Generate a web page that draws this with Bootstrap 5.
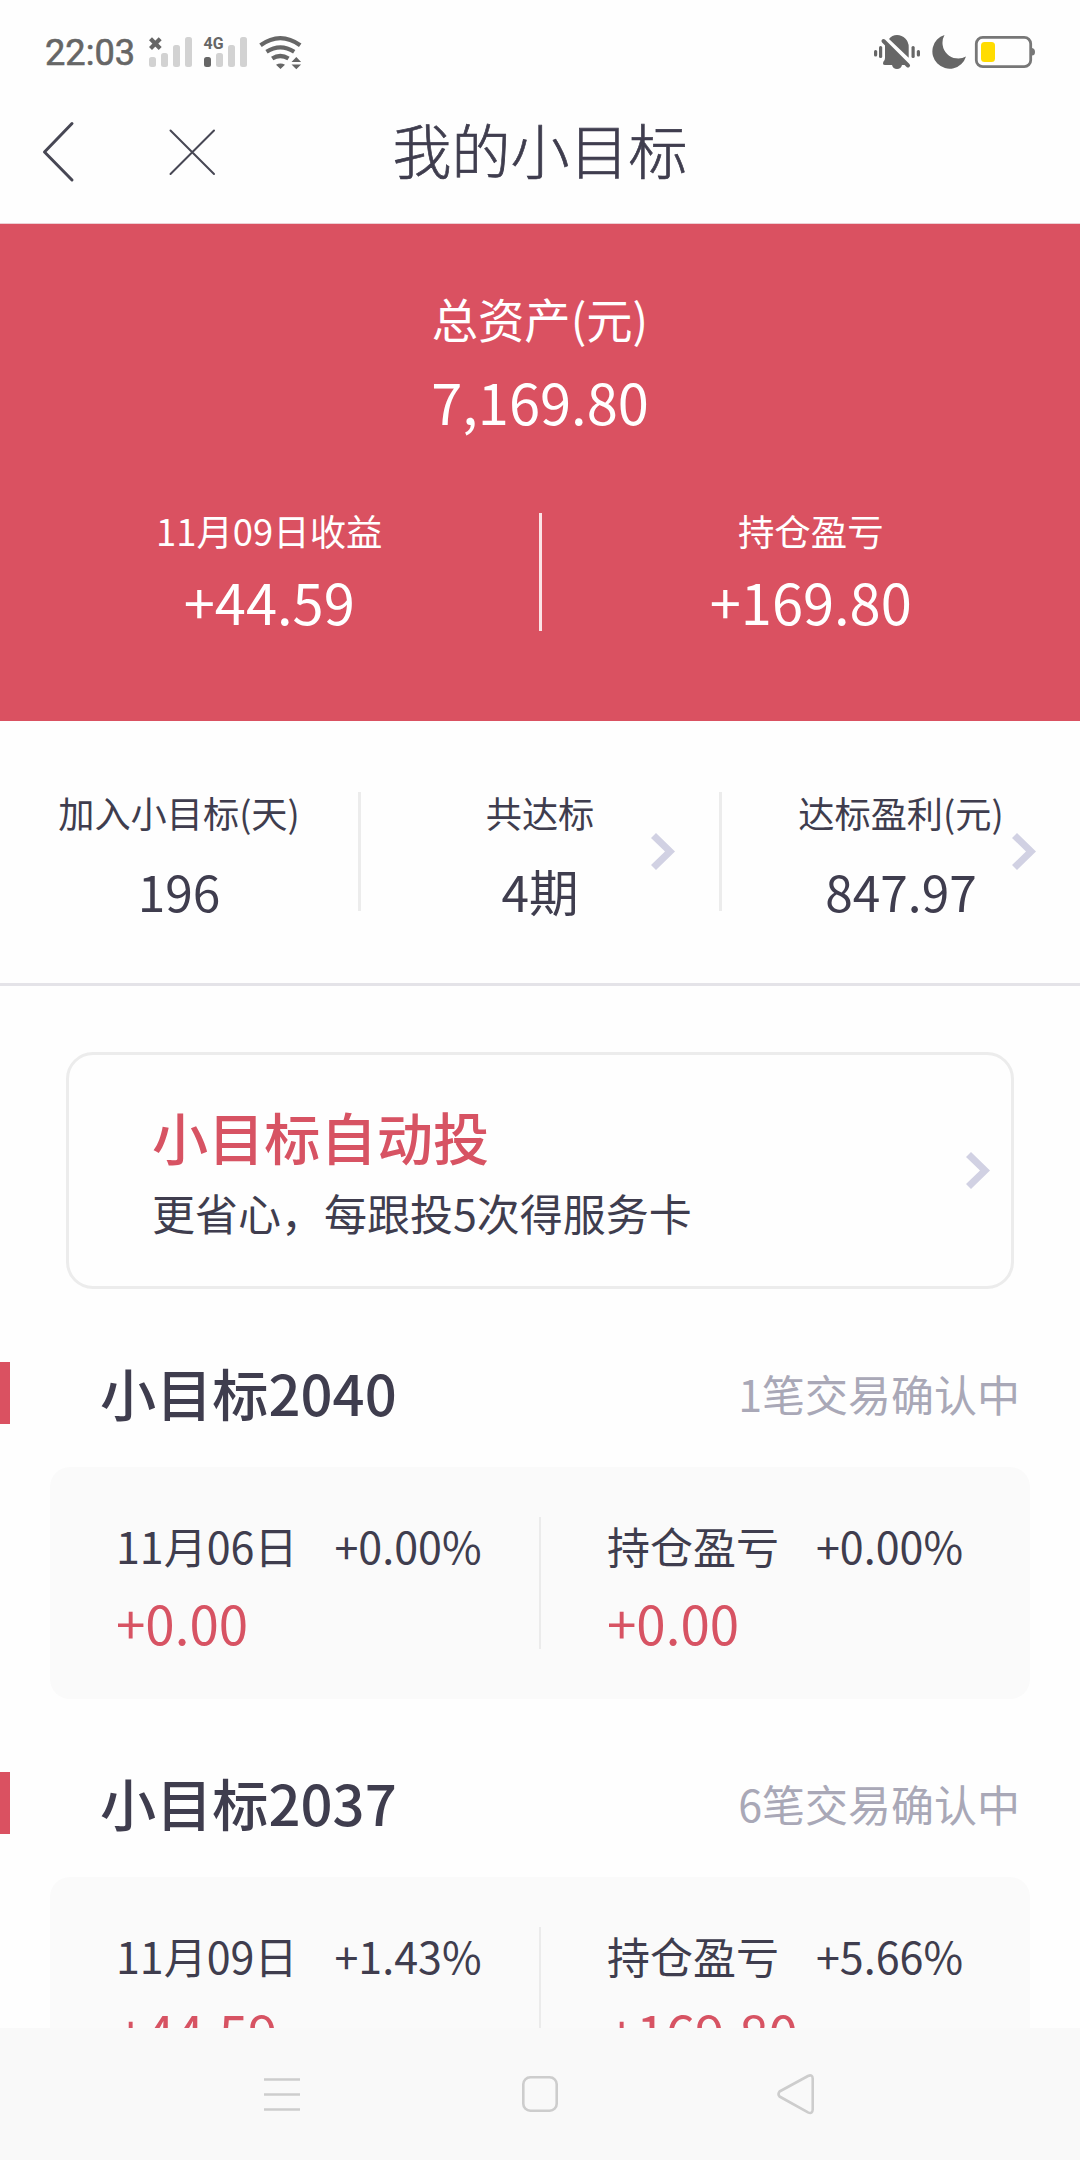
<!DOCTYPE html>
<html lang="zh-CN">
<head>
<meta charset="utf-8">
<meta name="viewport" content="width=device-width, initial-scale=1">
<title>我的小目标</title>
<link href="https://cdn.jsdelivr.net/npm/bootstrap@5.3.0/dist/css/bootstrap.min.css" rel="stylesheet">
<style>
  body { font-family: "Noto Sans CJK SC", sans-serif; color: #3f3d4e; background: #fefefe; line-height: 1; }
  svg { display: block; flex: none; }
  .screen { width: 1080px; height: 2160px; }
  .status { height: 100px; padding: 30px 40px 0 45px; }
  .clock { font: 400 36.2px/46px Roboto, sans-serif; color: #666; -webkit-text-stroke: .6px #666; width: 98px; }
  .titlebar { height: 124px; border-bottom: 1px solid #eccfd4; }
  .titlebar-side { width: 380px; padding: 21px 0 0 41px; }
  .titlebar h1 { font-size: 59px; font-weight: 300; line-height: 98px; -webkit-text-stroke: .7px #3f3d4e; }
  .close-icon { margin-left: 90px; }
  .hero { height: 497px; background: #da5161; padding-top: 64px; }
  .hero-label { font-size: 46.3px; line-height: 60px; }
  .hero-sum { font-size: 56px; line-height: 80px; margin-top: 13px; }
  .hero-cols { margin-top: 72px; height: 118px; }
  .hero-name { font-size: 36.4px; line-height: 34px; }
  .hero-num { font-size: 56px; line-height: 60px; margin-top: 24px; }
  .hero-rule { width: 3px; background: #fbe3e6; }
  .stats { height: 265px; padding-top: 71px; border-bottom: 3px solid #e4e3e8; }
  .stat { height: 119px; }
  .stat + .stat { border-left: 3px solid #ececec; }
  .stat-name { font-size: 36.2px; line-height: 41px; }
  .stat-num { font-size: 49.6px; line-height: 60px; margin-top: 27px; }
  .stat-arrow { right: 44px; top: 41px; }
  .auto { margin: 66px 66px 0; height: 237px; border: 3px solid #ececec; border-radius: 27px; padding: 0 21px 0 83px; background: #fefefe; }
  .auto h2 { font-size: 56.2px; font-weight: 500; line-height: 70px; color: #d75363; margin: 0; }
  .auto p { font-size: 43px; line-height: 60px; margin: 11px 0 0; }
  .auto-text { height: 190px; padding-top: 25px; }
  .goal { height: 410px; padding-top: 73px; }
  .goal-head { height: 62px; border-left: 10px solid #da5161; padding: 0 60px 0 90px; }
  .goal-head h3 { font-size: 56.2px; font-weight: 500; line-height: 60px; margin: 0; }
  .goal-state { font-size: 43px; line-height: 63px; color: #a9a8b7; }
  .panel { margin: 43px 50px 0; height: 232px; border-radius: 20px; background: #fafafa; padding-top: 50px; }
  .panel-col { height: 132px; padding-left: 66px; }
  .panel-col + .panel-col { border-left: 2px solid #ebebeb; }
  .panel-line { font-size: 43px; line-height: 57px; }
  .panel-line .pct { margin-left: 37px; }
  .panel-amt { font-size: 52.9px; line-height: 60px; margin-top: 18px; color: #d75363; }
  .sysnav { height: 132px; background: #f9f9f9; z-index: 2; }
</style>
</head>
<body>
<div class="screen d-flex flex-column overflow-hidden position-relative">
  <div class="status d-flex flex-shrink-0 align-items-start">
    <div class="clock">22:03</div>
    <svg width="170" height="45" viewBox="143 30 170 45" fill="#d2d2d2">
      <path d="M150.500 38.700l9.700 9.700M160.200 38.700l-9.700 9.700" stroke="#666" stroke-width="4.200" fill="none"/>
      <rect x="149" y="57" width="7" height="10" rx="2.5"/><rect x="161" y="53" width="7" height="14" rx="2.5"/><rect x="173" y="45" width="7" height="22" rx="2.5"/><rect x="185" y="37" width="7" height="30" rx="2.5"/>
      <rect x="204" y="57" width="7" height="10" rx="2.5" fill="#666"/><rect x="216" y="53" width="7" height="14" rx="2.5"/><rect x="228" y="45" width="7" height="22" rx="2.5"/><rect x="240" y="37" width="7" height="30" rx="2.5"/>
      <text x="203.5" y="49" font-family="Roboto, sans-serif" font-weight="700" font-size="17" textLength="20" lengthAdjust="spacingAndGlyphs" fill="#666">4G</text>
      <g fill="none" stroke="#666" stroke-width="4.2"><path d="M260.5 45.3Q280.3 31 300.2 45.3"/><path d="M266.5 51.8Q280.3 43 294.2 51.8"/><path d="M272.2 58.6Q280.3 53.4 288.5 58.6"/></g>
      <path d="M276 64.8Q280.5 62 285 64.8L280.5 69zM291.5 62L296.3 57 301.1 62zM291.5 64.4L296.3 69.2 301.1 64.4z" fill="#666"/>
    </svg>
    <svg class="ms-auto" width="170" height="45" viewBox="870 30 170 45" fill="#666">
      <path d="M889 39Q892 35 897 35A12 12 0 0 1 908.7 47V57.8Z"/>
      <path d="M885 42V58Q885 60 883.5 61.5Q882 65 885 65H892Q893 69 897 69Q901 69 902 65H906Z"/>
      <path d="M883.5 41L908 65.5" stroke="#666" stroke-width="4" stroke-linecap="round"/>
      <rect x="874" y="50" width="3.2" height="6.4" rx="1.5"/><rect x="879" y="46" width="3.2" height="12" rx="1.5"/><rect x="911.5" y="46" width="3.2" height="12" rx="1.5"/><rect x="916.8" y="50" width="3.2" height="6.4" rx="1.5"/>
      <path d="M944.5 35A17.2 17.2 0 1 0 966 56.5A15.8 15.8 0 0 1 944.5 35Z"/>
      <rect x="976.3" y="37.3" width="54.4" height="29.4" rx="6.5" fill="none" stroke="#777" stroke-width="2.8"/>
      <path d="M1032 48Q1035 48.500 1035 52T1032 55.500Z" fill="#777"/>
      <rect x="981" y="42" width="14" height="20" rx="3.5" fill="#ffdc00"/>
    </svg>
  </div>

  <header class="titlebar d-flex flex-shrink-0">
    <div class="titlebar-side d-flex align-items-start">
      <svg width="36" height="62" viewBox="41 121 36 62" fill="none" stroke="#474754" stroke-width="3" stroke-linecap="round" stroke-linejoin="round"><path d="M72 123.500L44.500 152L72 180"/></svg>
      <svg class="close-icon" width="50" height="62" viewBox="167 121 50 62" fill="none" stroke="#474754" stroke-width="2" stroke-linecap="round"><path d="M170.500 130.500L214 174M214 130.500L170.500 174"/></svg>
    </div>
    <h1 class="flex-fill text-center m-0">我的小目标</h1>
    <div class="titlebar-side"></div>
  </header>

  <section class="hero flex-shrink-0 text-white text-center">
    <div class="hero-label">总资产(元)</div>
    <div class="hero-sum">7,169.80</div>
    <div class="hero-cols d-flex">
      <div class="col"><div class="hero-name">11月09日收益</div><div class="hero-num">+44.59</div></div>
      <div class="hero-rule"></div>
      <div class="col"><div class="hero-name">持仓盈亏</div><div class="hero-num">+169.80</div></div>
    </div>
  </section>

  <section class="stats d-flex flex-shrink-0 text-center">
    <div class="stat col"><div class="stat-name">加入小目标(天)</div><div class="stat-num">196</div></div>
    <div class="stat col position-relative"><div class="stat-name">共达标</div><div class="stat-num">4期</div>
      <svg class="stat-arrow position-absolute" width="24" height="37" fill="#d1d1e3"><path d="M0 5L5 0L24 18.500L5 37L0 32L14 18.500Z"/></svg></div>
    <div class="stat col position-relative"><div class="stat-name">达标盈利(元)</div><div class="stat-num">847.97</div>
      <svg class="stat-arrow position-absolute" width="24" height="37" fill="#d1d1e3"><path d="M0 5L5 0L24 18.500L5 37L0 32L14 18.500Z"/></svg></div>
  </section>

  <section class="auto d-flex flex-shrink-0 align-items-center justify-content-between">
    <div class="auto-text"><h2>小目标自动投</h2><p>更省心，每跟投5次得服务卡</p></div>
    <svg width="24" height="37" fill="#d1d1e3"><path d="M0 5L5 0L24 18.500L5 37L0 32L14 18.500Z"/></svg>
  </section>

  <section class="goal flex-shrink-0">
    <div class="goal-head d-flex justify-content-between"><h3>小目标2040</h3><div class="goal-state">1笔交易确认中</div></div>
    <div class="panel d-flex">
      <div class="panel-col col"><div class="panel-line d-flex"><span>11月06日</span><span class="pct">+0.00%</span></div><div class="panel-amt">+0.00</div></div>
      <div class="panel-col col"><div class="panel-line d-flex"><span>持仓盈亏</span><span class="pct">+0.00%</span></div><div class="panel-amt">+0.00</div></div>
    </div>
  </section>

  <section class="goal flex-shrink-0">
    <div class="goal-head d-flex justify-content-between"><h3>小目标2037</h3><div class="goal-state">6笔交易确认中</div></div>
    <div class="panel d-flex">
      <div class="panel-col col"><div class="panel-line d-flex"><span>11月09日</span><span class="pct">+1.43%</span></div><div class="panel-amt">+44.59</div></div>
      <div class="panel-col col"><div class="panel-line d-flex"><span>持仓盈亏</span><span class="pct">+5.66%</span></div><div class="panel-amt">+169.80</div></div>
    </div>
  </section>

  <nav class="sysnav position-absolute bottom-0 start-0 w-100">
    <svg width="1080" height="132" viewBox="0 2028 1080 132" fill="none" stroke="#cdcdcd" stroke-width="2.6" stroke-linejoin="round">
      <path d="M264 2079.500H300M264 2094.500H300M264 2109.500H300"/>
      <rect x="523.300" y="2077.300" width="33.400" height="33.400" rx="7"/>
      <path d="M779.500 2091.500L808 2076Q812.500 2074 812.700 2078.500V2109.500Q812.500 2114.500 808 2112.300L779.500 2096.500Q777.500 2094 779.500 2091.500Z"/>
    </svg>
  </nav>
</div>
<script src="https://cdn.jsdelivr.net/npm/bootstrap@5.3.0/dist/js/bootstrap.bundle.min.js"></script>
</body>
</html>
